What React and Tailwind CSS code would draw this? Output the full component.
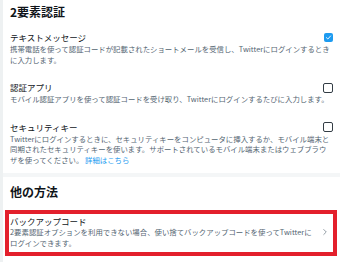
import { ChevronRight } from "lucide-react";

function Checkbox({ checked }) {
  if (checked) {
    return (
      <span className="flex h-[9px] w-[9px] items-center justify-center rounded-[2px] bg-[#1d9bf0]">
        <svg viewBox="0 0 10 10" className="h-[7px] w-[7px]">
          <path d="M2 5.2 L4.1 7.2 L8 2.8" fill="none" stroke="white" strokeWidth="1.3" strokeLinecap="round" strokeLinejoin="round" />
        </svg>
      </span>
    );
  }
  return <span className="block h-[10px] w-[10px] rounded-[2px] border-[1.5px] border-[#333d45]" />;
}

function Option({ title, checked, children, className = "" }) {
  return (
    <div className={className}>
      <div className="flex items-center justify-between pr-[7px]">
        <div className="text-[8.5px] leading-[11px] text-[#0f1419]">{title}</div>
        <Checkbox checked={checked} />
      </div>
      <div className="mt-[1px] text-[7.4px] leading-[10.5px] text-[#536471] whitespace-nowrap">{children}</div>
    </div>
  );
}

export default function App() {
  return (
    <div
      className="h-[262px] w-[340px] overflow-hidden bg-white border-l-[3px] border-[#eef1f2]"
      style={{ fontFamily: '"Noto Sans CJK JP", "Noto Sans", sans-serif' }}
    >
      <div className="pl-[7px]">
        <h2 className="pt-[5px] text-[12px] font-bold leading-[14px] text-[#0f1419]">2要素認証</h2>

        <Option title="テキストメッセージ" checked className="mt-[13px]">
          携帯電話を使って認証コードが記載されたショートメールを受信し、Twitterにログインするとき
          <br />
          に入力します。
        </Option>

        <Option title="認証アプリ" className="mt-[17px]">
          モバイル認証アプリを使って認証コードを受け取り、Twitterにログインするたびに入力します。
        </Option>

        <Option title="セキュリティキー" className="mt-[17px]">
          Twitterにログインするときに、セキュリティキーをコンピュータに挿入するか、モバイル端末と
          <br />
          同期されたセキュリティキーを使います。サポートされているモバイル端末またはウェブブラウ
          <br />
          ザを使ってください。 <span className="text-[#1d9bf0]">詳細はこちら</span>
        </Option>
      </div>

      <div className="mt-[8px] h-[4px] bg-[#f4f6f7]" />

      <div className="pl-[7px]">
        <h2 className="pt-[8px] text-[12px] font-bold leading-[14px] text-[#0f1419]">他の方法</h2>
      </div>

      <div className="ml-[2px] mr-[3px] mt-[11px] flex items-center justify-between border-[4px] border-[#e3202c] pl-[1px] pr-[3px] pt-[2px] pb-[4px]">
        <div>
          <div className="text-[8.5px] leading-[11px] text-[#0f1419]">バックアップコード</div>
          <div className="text-[7.4px] leading-[10.5px] text-[#536471] whitespace-nowrap">
            2要素認証オプションを利用できない場合、使い捨てバックアップコードを使ってTwitterに
            <br />
            ログインできます。
          </div>
        </div>
        <ChevronRight className="h-[10px] w-[10px] text-[#536471]" strokeWidth={1.5} />
      </div>
    </div>
  );
}
